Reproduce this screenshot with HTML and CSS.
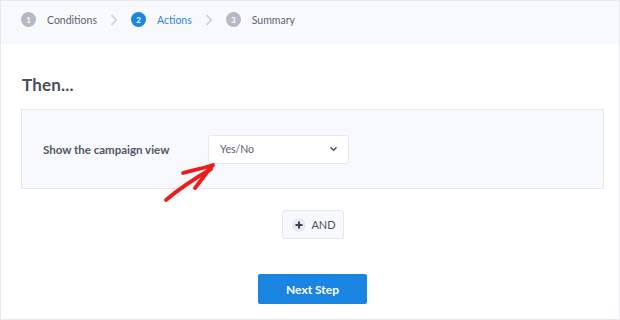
FILE: index.html
```html
<!DOCTYPE html>
<html>
<head>
<meta charset="utf-8">
<link rel="stylesheet" href="styles.css">
</head>
<body>
<div class="frame">
  <div class="steps">
    <div class="step">
      <span class="num">1</span><span class="label">Conditions</span>
    </div>
    <svg class="chev" width="8" height="12" viewBox="0 0 8 12"><path d="M1.5 1 L6.2 6 L1.5 11" fill="none" stroke="#d3d7de" stroke-width="2"/></svg>
    <div class="step active">
      <span class="num">2</span><span class="label">Actions</span>
    </div>
    <svg class="chev" width="8" height="12" viewBox="0 0 8 12"><path d="M1.5 1 L6.2 6 L1.5 11" fill="none" stroke="#d3d7de" stroke-width="2"/></svg>
    <div class="step">
      <span class="num">3</span><span class="label">Summary</span>
    </div>
  </div>
  <div class="main">
    <h2 class="title">Then...</h2>
    <div class="panel">
      <span class="field-label">Show the campaign view</span>
      <div class="select">
        <span>Yes/No</span>
        <svg width="9" height="6" viewBox="0 0 9 6"><path d="M1.5 1.2 L4.5 4.2 L7.5 1.2" fill="none" stroke="#4a505c" stroke-width="1.6"/></svg>
      </div>
      <svg class="arrow" width="60" height="44" viewBox="0 0 60 44">
        <path d="M4 41 C 18 29, 32 20, 49 10" fill="none" stroke="#ee1b1b" stroke-width="3.8" stroke-linecap="round"/>
        <path d="M21 14 C 32 11, 42 9, 51 6 C 46 12, 40 20, 33 29" fill="none" stroke="#ee1b1b" stroke-width="3.8" stroke-linecap="round" stroke-linejoin="round"/>
      </svg>
    </div>
    <div class="actions">
      <button class="and-btn">
        <span class="plus"><svg width="8" height="8" viewBox="0 0 8 8"><path d="M4 0.5 V7.5 M0.5 4 H7.5" stroke="#3a3f4a" stroke-width="2"/></svg></span>AND
      </button>
      <button class="next-btn">Next Step</button>
    </div>
  </div>
</div>
</body>
</html>
```

FILE: styles.css
```css
* { box-sizing: border-box; }
html, body { margin: 0; padding: 0; background: #ffffff; }
body { font-family: Lato, "Open Sans", sans-serif; }
.frame {
  width: 620px;
  height: 320px;
  border: 1px solid #e6e9ef;
  overflow: hidden;
}
.steps {
  height: 43px;
  background: #f8f9fd;
  display: flex;
  align-items: flex-start;
  padding: 11px 0 0 20px;
}
.step { display: flex; align-items: center; height: 15px; }
.num {
  width: 15px;
  height: 15px;
  border-radius: 50%;
  background: #b4b9c3;
  color: #ffffff;
  font-size: 8px;
  font-weight: 700;
  display: flex;
  align-items: center;
  justify-content: center;
}
.label {
  margin-left: 11px;
  font-size: 10.5px;
  color: #5d6372;
}
.step.active .num { background: #1a87e0; }
.step.active .label { color: #2a87de; }
.chev { margin: 2px 13px 0 13px; }
.main { padding: 0 15px 0 20px; }
.title {
  margin: 30px 0 0 1px;
  font-size: 17px;
  line-height: 22px;
  font-weight: 700;
  color: #484e5a;
  letter-spacing: 0.2px;
}
.panel {
  position: relative;
  margin-top: 13px;
  height: 80px;
  background: #f8f9fd;
  border: 1px solid #e6e9f0;
  display: flex;
  align-items: center;
  padding-left: 21px;
}
.field-label {
  width: 165px;
  font-size: 11.5px;
  font-weight: 700;
  color: #4f5664;
}
.select {
  width: 141px;
  height: 29px;
  background: #ffffff;
  border: 1px solid #e6e9ef;
  border-radius: 3px;
  display: flex;
  align-items: center;
  justify-content: space-between;
  padding: 0 10px 0 11px;
  font-size: 10.5px;
  color: #5a606d;
}
.arrow {
  position: absolute;
  left: 140px;
  top: 49px;
}
.actions {
  display: flex;
  flex-direction: column;
  align-items: center;
}
.and-btn {
  margin-top: 21px;
  width: 62px;
  height: 29px;
  background: #f8f9fd;
  border: 1px solid #e3e7ee;
  border-radius: 3px;
  display: flex;
  align-items: center;
  justify-content: center;
  gap: 5px;
  font-family: Lato, sans-serif;
  font-size: 11px;
  color: #4a505c;
  padding: 0 0 0 3px;
}
.plus {
  width: 14px;
  height: 14px;
  border-radius: 50%;
  background: #e6eaf2;
  display: flex;
  align-items: center;
  justify-content: center;
}
.next-btn {
  margin-top: 35px;
  width: 109px;
  height: 30px;
  background: #1a85e0;
  border: none;
  border-radius: 2px;
  color: #ffffff;
  font-family: Lato, sans-serif;
  font-size: 12px;
  font-weight: 700;
}
```
